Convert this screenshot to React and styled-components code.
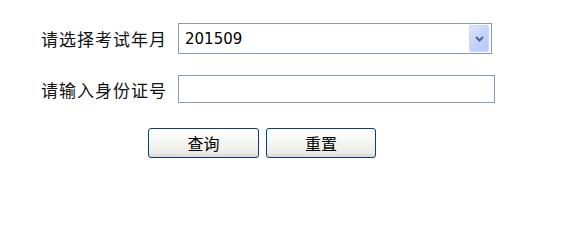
import React from "react";
import styled, { createGlobalStyle } from "styled-components";

const Global = createGlobalStyle`
  html, body { margin: 0; padding: 0; background: #fff; }
  body { font-family: "Noto Sans CJK SC", "DejaVu Sans", sans-serif; }
`;

const Form = styled.div`
  display: grid;
  grid-template-columns: 125px 320px;
  column-gap: 12px;
  row-gap: 21px;
  padding: 23px 0 0 41px;
  align-items: center;
`;

const Label = styled.div`
  font-family: "Noto Sans CJK SC", sans-serif;
  font-size: 17px;
  letter-spacing: 1px;
  color: #111;
  white-space: nowrap;
  line-height: 1;
`;

const SelectBox = styled.div`
  box-sizing: border-box;
  width: 314px;
  height: 31px;
  border: 1px solid #7f9db9;
  display: flex;
  align-items: center;
  justify-content: space-between;
  padding: 1px 2px 1px 6px;
  font-family: "DejaVu Sans", sans-serif;
  font-size: 15px;
  color: #000;
  background: #fff;
`;

const DropBtn = styled.div`
  box-sizing: border-box;
  width: 20px;
  height: 27px;
  border-radius: 2px;
  background: linear-gradient(135deg, #dfe7ff 0%, #c3d3fd 50%, #b6c9fb 100%);
  border: 1px solid #c9d6f7;
  display: flex;
  align-items: center;
  justify-content: center;
`;

const TextInput = styled.input`
  box-sizing: border-box;
  width: 317px;
  height: 28px;
  border: 1px solid #7f9db9;
  margin: 0;
  padding: 0 4px;
  outline: none;
  font-size: 15px;
  background: #fff;
`;

const Buttons = styled.div`
  grid-column: 1 / span 2;
  display: flex;
  gap: 7px;
  padding-left: 107px;
  margin-top: 4px;
`;

const Button = styled.button`
  box-sizing: border-box;
  width: ${(p) => p.$w}px;
  height: 30px;
  border: 1px solid #0b3e7c;
  border-radius: 3px;
  background: linear-gradient(180deg, #ffffff 0%, #f7f7f3 40%, #ecebe5 85%, #d8d6cc 100%);
  font-family: "Noto Sans CJK SC", sans-serif;
  font-size: 16px;
  color: #000;
  padding: 0;
  margin: 0;
  line-height: 1;
  display: flex;
  align-items: center;
  justify-content: center;
`;

export default function App() {
  return (
    <>
      <Global />
      <Form>
        <Label>请选择考试年月</Label>
        <SelectBox>
          <span>201509</span>
          <DropBtn>
            <svg width="9" height="6" viewBox="0 0 9 6">
              <path d="M1 1 L4.5 4.5 L8 1" stroke="#4d6185" strokeWidth="2" fill="none" />
            </svg>
          </DropBtn>
        </SelectBox>
        <Label>请输入身份证号</Label>
        <TextInput type="text" />
        <Buttons>
          <Button $w={111}>查询</Button>
          <Button $w={110}>重置</Button>
        </Buttons>
      </Form>
    </>
  );
}
